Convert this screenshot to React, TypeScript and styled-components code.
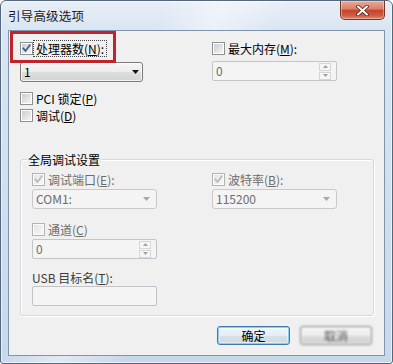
import React from "react";
import styled, { createGlobalStyle } from "styled-components";

const GlobalStyle = createGlobalStyle`
  html, body {
    margin: 0;
    padding: 0;
    background: #ffffff;
  }
  body {
    font-family: "Noto Sans CJK SC", "Liberation Sans", sans-serif;
    font-size: 12px;
    color: #000;
  }
`;

const Window = styled.div`
  box-sizing: border-box;
  width: 393px;
  height: 364px;
  display: flex;
  flex-direction: column;
  padding: 0 7px 7px;
  border: 1px solid #56677c;
  border-radius: 6px 6px 3px 3px;
  background:
    linear-gradient(115deg, rgba(255, 255, 255, 0) 30%, rgba(255, 255, 255, 0.45) 40%, rgba(255, 255, 255, 0) 52%),
    linear-gradient(to bottom, #e8eef7 0px, #d9e5f2 30px, #c8d8eb 100%);
  box-shadow: inset 0 0 0 1px rgba(255, 255, 255, 0.6);
  overflow: hidden;
`;

const TitleBar = styled.div`
  height: 29px;
  flex: none;
  display: flex;
  justify-content: space-between;
  align-items: flex-start;
`;

const Title = styled.div`
  margin-top: 8px;
  font-size: 12.5px;
  line-height: 14px;
  letter-spacing: 0.2px;
  color: #1b1b1b;
`;

const CloseButton = styled.div`
  box-sizing: border-box;
  width: 45px;
  height: 19px;
  display: flex;
  align-items: center;
  justify-content: center;
  border: 1px solid #7a3428;
  border-top: none;
  border-radius: 0 0 5px 5px;
  background: linear-gradient(
    to bottom,
    #e9ab9a 0%,
    #db7d68 45%,
    #c6432c 52%,
    #cf5b43 80%,
    #e08a6c 100%
  );
  box-shadow: inset 0 0 0 1px rgba(255, 255, 255, 0.35);
`;

const Client = styled.div`
  flex: 1;
  position: relative;
  display: flex;
  flex-direction: column;
  padding: 0 12px 0 11px;
  border: 1px solid #7f94ad;
  background: #f0f0f0;
`;

const Highlight = styled.div`
  position: absolute;
  left: 1px;
  top: 0;
  width: 106px;
  height: 32px;
  box-sizing: border-box;
  border: 3px solid #c4222a;
  pointer-events: none;
`;

const TopGrid = styled.div`
  display: grid;
  grid-template-columns: 192px 1fr;
  padding-top: 11px;
`;

const Column = styled.div`
  display: flex;
  flex-direction: column;
  align-items: flex-start;
`;

const CheckRow = styled.label<{ $top?: number; $disabled?: boolean }>`
  display: flex;
  align-items: center;
  gap: 2px;
  height: 13px;
  margin-top: ${(p) => p.$top ?? 0}px;
  color: ${(p) => (p.$disabled ? "#6d6d6d" : "#000")};
`;

const Box = styled.span<{ $disabled?: boolean }>`
  box-sizing: border-box;
  width: 13px;
  height: 13px;
  flex: none;
  display: flex;
  align-items: center;
  justify-content: center;
  padding: 1px;
  border: 1px solid ${(p) => (p.$disabled ? "#b4b4b4" : "#8e8f8f")};
  background: ${(p) =>
    p.$disabled
      ? "linear-gradient(135deg, #e6e6e6, #f6f6f6) content-box, #fbfbfb"
      : "linear-gradient(135deg, #c9cdd2, #f4f5f6) content-box, #ffffff"};
`;

const LabelText = styled.span<{ $focus?: boolean }>`
  line-height: 13px;
  white-space: nowrap;
  padding: 0 1px;
  outline: ${(p) => (p.$focus ? "1px dotted #444" : "none")};
  outline-offset: 1px;
`;

const Combo = styled.div<{ $w: number; $top?: number; $disabled?: boolean }>`
  box-sizing: border-box;
  width: ${(p) => p.$w}px;
  height: 20px;
  margin-top: ${(p) => p.$top ?? 0}px;
  display: flex;
  align-items: center;
  justify-content: space-between;
  padding: 0 ${(p) => (p.$disabled ? 6 : 3)}px 0 3px;
  border: 1px solid ${(p) => (p.$disabled ? "#c9c9c9" : "#7a7a7a")};
  border-radius: 3px;
  color: ${(p) => (p.$disabled ? "#6d6d6d" : "#000")};
  background: ${(p) =>
    p.$disabled
      ? "#f4f4f4"
      : "linear-gradient(to bottom, #f6f6f6 0%, #ececec 50%, #dedede 51%, #d3d3d3 100%)"};
  box-shadow: ${(p) => (p.$disabled ? "none" : "inset 0 0 0 1px rgba(255,255,255,0.7)")};
  line-height: 14px;
`;

const Spin = styled.div<{ $w: number; $top?: number }>`
  box-sizing: border-box;
  width: ${(p) => p.$w}px;
  height: 20px;
  margin-top: ${(p) => p.$top ?? 0}px;
  display: flex;
  align-items: center;
  justify-content: space-between;
  padding: 0 5px 0 3px;
  border: 1px solid #c2c4c8;
  border-radius: 2px;
  background: #f4f4f4;
  color: #6d6d6d;
  line-height: 14px;
`;

const SpinButtons = styled.div`
  display: flex;
  flex-direction: column;
  gap: 1px;
`;

const SpinButton = styled.div`
  box-sizing: border-box;
  width: 12px;
  height: 8px;
  display: flex;
  align-items: center;
  justify-content: center;
  border: 1px solid #d6d6d6;
  background: #f6f6f6;
`;

const TextBox = styled.div<{ $w: number; $top?: number }>`
  box-sizing: border-box;
  width: ${(p) => p.$w}px;
  height: 20px;
  margin-top: ${(p) => p.$top ?? 0}px;
  border: 1px solid #c2c4c8;
  border-radius: 2px;
  background: #f4f4f4;
`;

const PlainLabel = styled.div<{ $top?: number }>`
  margin-top: ${(p) => p.$top ?? 0}px;
  line-height: 13px;
  color: #3c3c3c;
  white-space: nowrap;
`;

const Group = styled.div`
  margin-top: 37px;
  margin-right: -2px;
  display: flex;
  flex-direction: column;
  border: 1px solid #d3d9de;
  border-radius: 3px;
  box-shadow: inset 1px 1px 0 #ffffff, 1px 1px 0 #ffffff;
  padding: 0 0 9px 11px;
`;

const GroupTitle = styled.div`
  align-self: flex-start;
  margin: -7px 0 0 -5px;
  padding: 0 1px;
  line-height: 13px;
  background: #f0f0f0;
  color: #000;
`;

const GroupGrid = styled.div`
  display: grid;
  grid-template-columns: 180px 1fr;
  align-items: start;
  margin-top: 7px;
`;

const ButtonRow = styled.div`
  display: flex;
  justify-content: flex-end;
  gap: 10px;
  margin-top: 10px;
`;

const Button = styled.div<{ $primary?: boolean; $smudged?: boolean }>`
  box-sizing: border-box;
  width: ${(p) => (p.$primary ? 73 : 72)}px;
  height: 19px;
  display: flex;
  align-items: center;
  justify-content: center;
  border: 1px solid ${(p) => (p.$primary ? "#3d7bad" : "#7b7b7b")};
  border-radius: 3px;
  background: ${(p) =>
    p.$primary
      ? "linear-gradient(to bottom, #f1f5f8 0%, #e6edf2 50%, #d8e1e8 51%, #cdd8e1 100%)"
      : "linear-gradient(to bottom, #f6f6f6 0%, #ececec 50%, #dddddd 51%, #cfcfcf 100%)"};
  box-shadow: ${(p) =>
    p.$primary ? "inset 0 0 0 1px #8fcdf0, inset 0 0 0 2px rgba(255,255,255,0.45)" : "inset 0 0 0 1px #fafafa"};
  color: ${(p) => (p.$smudged ? "#555" : "#000")};
  filter: ${(p) => (p.$smudged ? "blur(0.8px)" : "none")};
  line-height: 14px;
`;

const CheckMark = ({ disabled }: { disabled?: boolean }) => (
  <svg width="9" height="9" viewBox="0 0 9 9">
    <path
      d="M1.3 4.4 L3.5 6.9 L7.8 1.2"
      fill="none"
      stroke={disabled ? "#b9b9b9" : "#3c5a8c"}
      strokeWidth="1.7"
      strokeLinecap="square"
    />
  </svg>
);

const DownArrow = ({ disabled }: { disabled?: boolean }) => (
  <svg width="7" height="4" viewBox="0 0 7 4">
    <path d="M0 0 H7 L3.5 4 Z" fill={disabled ? "#a8a8a8" : "#111"} />
  </svg>
);

const TinyArrow = ({ up }: { up?: boolean }) => (
  <svg width="5" height="3" viewBox="0 0 5 3">
    <path d={up ? "M0 3 H5 L2.5 0 Z" : "M0 0 H5 L2.5 3 Z"} fill="#a0a0a0" />
  </svg>
);

const CloseGlyph = () => (
  <svg width="13" height="11" viewBox="0 0 13 11">
    <path
      d="M2 1.5 L11 9.5 M11 1.5 L2 9.5"
      stroke="#5a1e14"
      strokeWidth="3.6"
      strokeLinecap="round"
    />
    <path
      d="M2 1.5 L11 9.5 M11 1.5 L2 9.5"
      stroke="#ffffff"
      strokeWidth="2"
      strokeLinecap="round"
    />
  </svg>
);

const Check = ({
  label,
  checked,
  disabled,
  focus,
  top,
}: {
  label: React.ReactNode;
  checked?: boolean;
  disabled?: boolean;
  focus?: boolean;
  top?: number;
}) => (
  <CheckRow $top={top} $disabled={disabled}>
    <Box $disabled={disabled}>{checked && <CheckMark disabled={disabled} />}</Box>
    <LabelText $focus={focus}>{label}</LabelText>
  </CheckRow>
);

const SpinBox = ({ value, top }: { value: string; top?: number }) => (
  <Spin $w={125} $top={top}>
    <span>{value}</span>
    <SpinButtons>
      <SpinButton>
        <TinyArrow up />
      </SpinButton>
      <SpinButton>
        <TinyArrow />
      </SpinButton>
    </SpinButtons>
  </Spin>
);

export default function App() {
  return (
    <>
      <GlobalStyle />
      <Window>
        <TitleBar>
          <Title>引导高级选项</Title>
          <CloseButton>
            <CloseGlyph />
          </CloseButton>
        </TitleBar>
        <Client>
          <Highlight />
          <TopGrid>
            <Column>
              <Check
                checked
                focus
                label={
                  <>
                    处理器数(<u>N</u>):
                  </>
                }
              />
              <Combo $w={123} $top={7}>
                <span>1</span>
                <DownArrow />
              </Combo>
              <Check
                top={10}
                label={
                  <>
                    PCI 锁定(<u>P</u>)
                  </>
                }
              />
              <Check
                top={4}
                label={
                  <>
                    调试(<u>D</u>)
                  </>
                }
              />
            </Column>
            <Column>
              <Check
                label={
                  <>
                    最大内存(<u>M</u>):
                  </>
                }
              />
              <SpinBox value="0" top={6} />
            </Column>
          </TopGrid>

          <Group>
            <GroupTitle>全局调试设置</GroupTitle>
            <GroupGrid>
              <Column>
                <Check
                  checked
                  disabled
                  label={
                    <>
                      调试端口(<u>E</u>):
                    </>
                  }
                />
                <Combo $w={125} $top={3} $disabled>
                  <span>COM1:</span>
                  <DownArrow disabled />
                </Combo>
                <Check
                  disabled
                  top={14}
                  label={
                    <>
                      通道(<u>C</u>)
                    </>
                  }
                />
                <SpinBox value="0" top={3} />
                <PlainLabel $top={12}>
                  USB 目标名(<u>T</u>):
                </PlainLabel>
                <TextBox $w={125} $top={2} />
              </Column>
              <Column>
                <Check
                  checked
                  disabled
                  label={
                    <>
                      波特率(<u>B</u>):
                    </>
                  }
                />
                <Combo $w={125} $top={3} $disabled>
                  <span>115200</span>
                  <DownArrow disabled />
                </Combo>
              </Column>
            </GroupGrid>
          </Group>

          <ButtonRow>
            <Button $primary>确定</Button>
            <Button $smudged>取消</Button>
          </ButtonRow>
        </Client>
      </Window>
    </>
  );
}
